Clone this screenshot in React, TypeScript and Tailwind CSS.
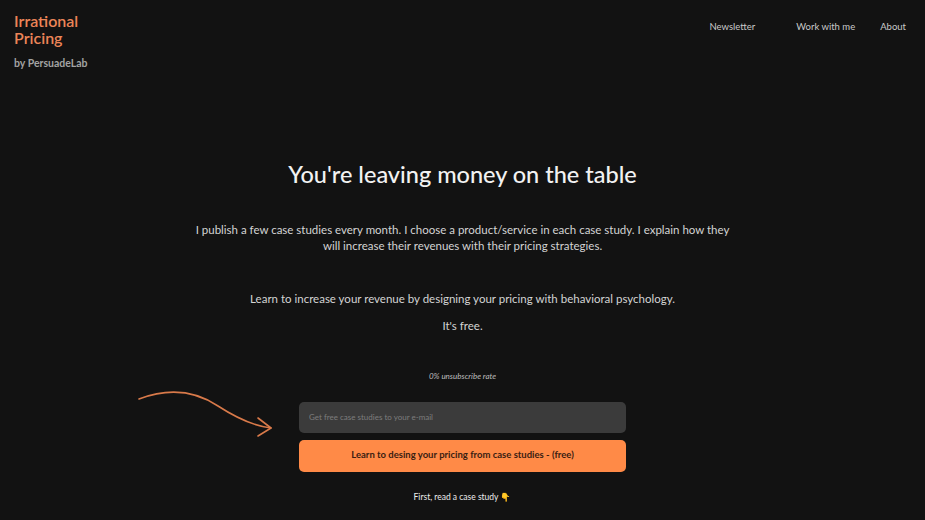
const FONT = "font-['Lato','Open_Sans',sans-serif]";

function CurvyArrow() {
  return (
    <svg width="140" height="52" viewBox="0 0 140 52" fill="none" className="shrink-0">
      <path
        d="M1 11 C 22 3, 50 -2, 80 18 C 100 31, 116 38, 133 40"
        stroke="#d97a4a"
        strokeWidth="1.6"
        strokeLinecap="round"
      />
      <path
        d="M120 30 L133 40 L120 48"
        stroke="#d97a4a"
        strokeWidth="1.6"
        strokeLinecap="round"
        strokeLinejoin="round"
      />
    </svg>
  );
}

export default function App() {
  return (
    <div className={`min-h-[520px] w-full bg-[#121212] ${FONT}`}>
      <header className="flex items-start justify-between pl-[14px] pr-[19px] pt-[12px]">
        <div>
          <a className="flex flex-col text-[16px] font-semibold leading-[17px] text-[#ec8558]">
            <span>Irrational</span>
            <span>Pricing</span>
          </a>
          <p className="mt-[10px] text-[10.5px] font-bold text-[#a3a3a3]">by PersuadeLab</p>
        </div>
        <nav className="mt-[8px] flex text-[9.5px] text-[#c9c9c9]">
          <a>Newsletter</a>
          <a className="ml-[41px]">Work with me</a>
          <a className="ml-[25px]">About</a>
        </nav>
      </header>

      <main className="flex flex-col items-center text-center">
        <h1 className="mt-[85px] text-[23.5px] font-medium text-[#f2f2f2]">
          You're leaving money on the table
        </h1>
        <p className="mt-[30px] w-[545px] text-[11.5px] leading-[16px] text-[#d4d4d4]">
          I publish a few case studies every month. I choose a product/service in each case study. I
          explain how they will increase their revenues with their pricing strategies.
        </p>
        <p className="mt-[36px] text-[11.5px] text-[#d4d4d4]">
          Learn to increase your revenue by designing your pricing with behavioral psychology.
        </p>
        <p className="mt-[10px] text-[11.5px] text-[#d4d4d4]">It's free.</p>

        <p className="mt-[35px] text-[8px] italic text-[#bdbdbd]">0% unsubscribe rate</p>

        <div className="relative mt-[20px] w-[327px]">
          <div className="absolute -left-[161px] -top-[14px]">
            <CurvyArrow />
          </div>
          <input
            placeholder="Get free case studies to your e-mail"
            className="h-[31px] w-full rounded-[5px] bg-[#3b3b3b] px-[10px] text-[8px] text-white outline-none placeholder:text-[#7d7d7d]"
          />
          <button className="mt-[7px] h-[32px] w-full rounded-[5px] bg-[#ff8a47] text-[9.5px] font-bold text-[#3a2012]">
            Learn to desing your pricing from case studies - (free)
          </button>
        </div>

        <p className="mt-[19px] text-[8.5px] text-[#ececec]">First, read a case study 👇</p>
      </main>
    </div>
  );
}
